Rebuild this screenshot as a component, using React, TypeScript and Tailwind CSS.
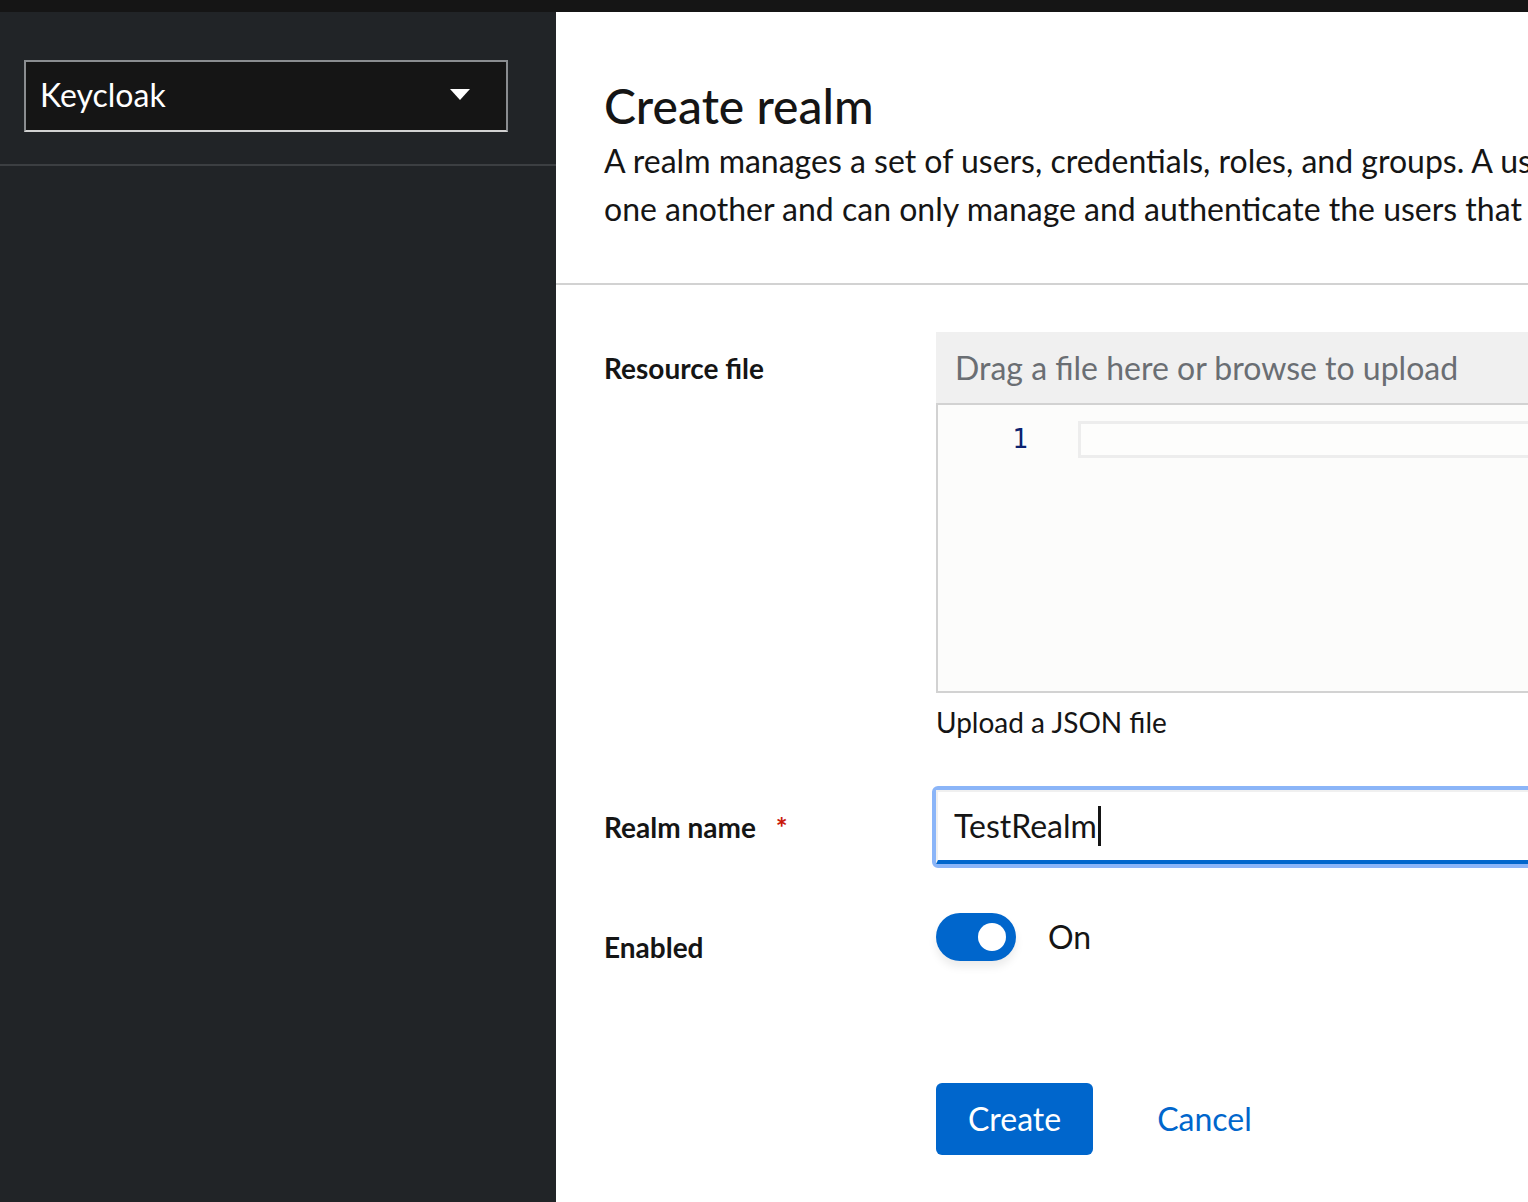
import { useState } from "react";

const font = { fontFamily: "Lato, 'Noto Sans', sans-serif" };

function RealmSelector() {
  return (
    <div className="border-b-2 border-[#3c3f42] px-6 pb-[32px] pt-[48px]">
      <button className="flex h-[72px] w-[484px] items-center justify-between border-2 border-[#8a8d90] border-b-[#d2d2d2] bg-[#151515] pl-[14px] pr-[36px] text-left text-[32px] text-white">
        <span className="-mt-[2px]">Keycloak</span>
        <svg width="20" height="12" viewBox="0 0 20 12" className="-mt-[2px]">
          <path d="M0 0h20L10 11z" fill="#fff" />
        </svg>
      </button>
    </div>
  );
}

function FormRow({
  label,
  required,
  labelClass,
  children,
  className,
}: {
  label?: string;
  required?: boolean;
  labelClass?: string;
  children: React.ReactNode;
  className?: string;
}) {
  return (
    <div className={`flex ${className ?? ""}`}>
      <div className="w-[332px] shrink-0">
        {label && (
          <label className={`flex items-start text-[28px] font-bold leading-[42px] text-[#151515] ${labelClass ?? ""}`}>
            {label}
            {required && <span className="ml-[20px] text-[#c9190b]">*</span>}
          </label>
        )}
      </div>
      <div className="min-w-0 flex-1">{children}</div>
    </div>
  );
}

function FileUpload() {
  return (
    <div>
      <div className="flex h-[71px] items-center bg-[#f0f0f0] px-[19px] text-[32px] text-[#6a6e73]">
        Drag a file here or browse to upload
      </div>
      <div className="flex h-[290px] border-2 border-[#d2d2d2] bg-[#fcfcfb]">
        <div
          className="w-[140px] pt-[18px] pr-[50px] text-right text-[26px] leading-[32px] text-[#0b216f]"
          style={{ fontFamily: "'DejaVu Sans Mono', monospace" }}
        >
          1
        </div>
        <div className="flex-1 pt-[16px]">
          <div className="h-[37px] border-[3px] border-r-0 border-[#ededed] bg-[#fdfdfc]" />
        </div>
      </div>
      <p className="mt-[8px] text-[28px] leading-[42px] text-[#151515]">Upload a JSON file</p>
    </div>
  );
}

export default function App() {
  const [enabled, setEnabled] = useState(true);

  return (
    <div className="flex h-[1202px] w-[1528px] flex-col overflow-hidden bg-[#151515]" style={font}>
      <div className="h-[12px] shrink-0" />
      <div className="flex min-h-0 flex-1">
        <aside className="w-[556px] shrink-0 bg-[#212427]">
          <RealmSelector />
        </aside>
        <main className="min-w-0 flex-1 overflow-hidden bg-white">
          <div className="w-[1900px]">
            <section className="border-b-2 border-[#d2d2d2] px-[48px] pb-[50px] pt-[64px]">
              <h1 className="text-[48px] font-medium leading-[1.25] text-[#151515]">Create realm</h1>
              <p className="mt-[1px] text-[32px] leading-[48px] text-[#151515]">
                <span className="block whitespace-nowrap">
                  A realm manages a set of users, credentials, roles, and groups. A user belongs to and logs into a realm. Realms are isolated from
                </span>
                <span className="block whitespace-nowrap">
                  one another and can only manage and authenticate the users that they control.
                </span>
              </p>
            </section>

            <form className="flex flex-col px-[48px] pt-[47px]">
              <FormRow label="Resource file" labelClass="pt-[15px]">
                <FileUpload />
              </FormRow>

              <FormRow label="Realm name" required labelClass="pt-[20px]" className="mt-[43px]">
                <div className="-ml-[4px] rounded-[6px] border-[4px] border-[#8bb5f8]">
                  <div className="flex h-[74px] items-center border-2 border-b-[4px] border-[#f0f0f0] border-b-[#0066cc] bg-white px-[16px] text-[32px] text-[#151515]">
                    TestRealm
                    <span className="ml-[1px] h-[40px] w-[3px] bg-[#151515]" />
                  </div>
                </div>
              </FormRow>

              <FormRow label="Enabled" labelClass="pt-[13px]" className="mt-[45px]">
                <div className="flex items-center gap-[32px]">
                  <button
                    type="button"
                    onClick={() => setEnabled(!enabled)}
                    className={`flex h-[48px] w-[80px] items-center rounded-full px-[10px] shadow-[0_6px_8px_rgba(0,0,0,0.08)] ${enabled ? "justify-end bg-[#0066cc]" : "justify-start bg-[#8a8d90]"}`}
                  >
                    <span className="h-[28px] w-[28px] rounded-full bg-white" />
                  </button>
                  <span className="text-[32px] text-[#151515]">{enabled ? "On" : "Off"}</span>
                </div>
              </FormRow>

              <FormRow className="mt-[115px]">
                <div className="flex items-center gap-[32px]">
                  <button type="button" className="h-[72px] rounded-[6px] bg-[#0066cc] px-[32px] text-[32px] text-white">
                    Create
                  </button>
                  <button type="button" className="px-[32px] text-[32px] text-[#0066cc]">
                    Cancel
                  </button>
                </div>
              </FormRow>
            </form>
          </div>
        </main>
      </div>
    </div>
  );
}
